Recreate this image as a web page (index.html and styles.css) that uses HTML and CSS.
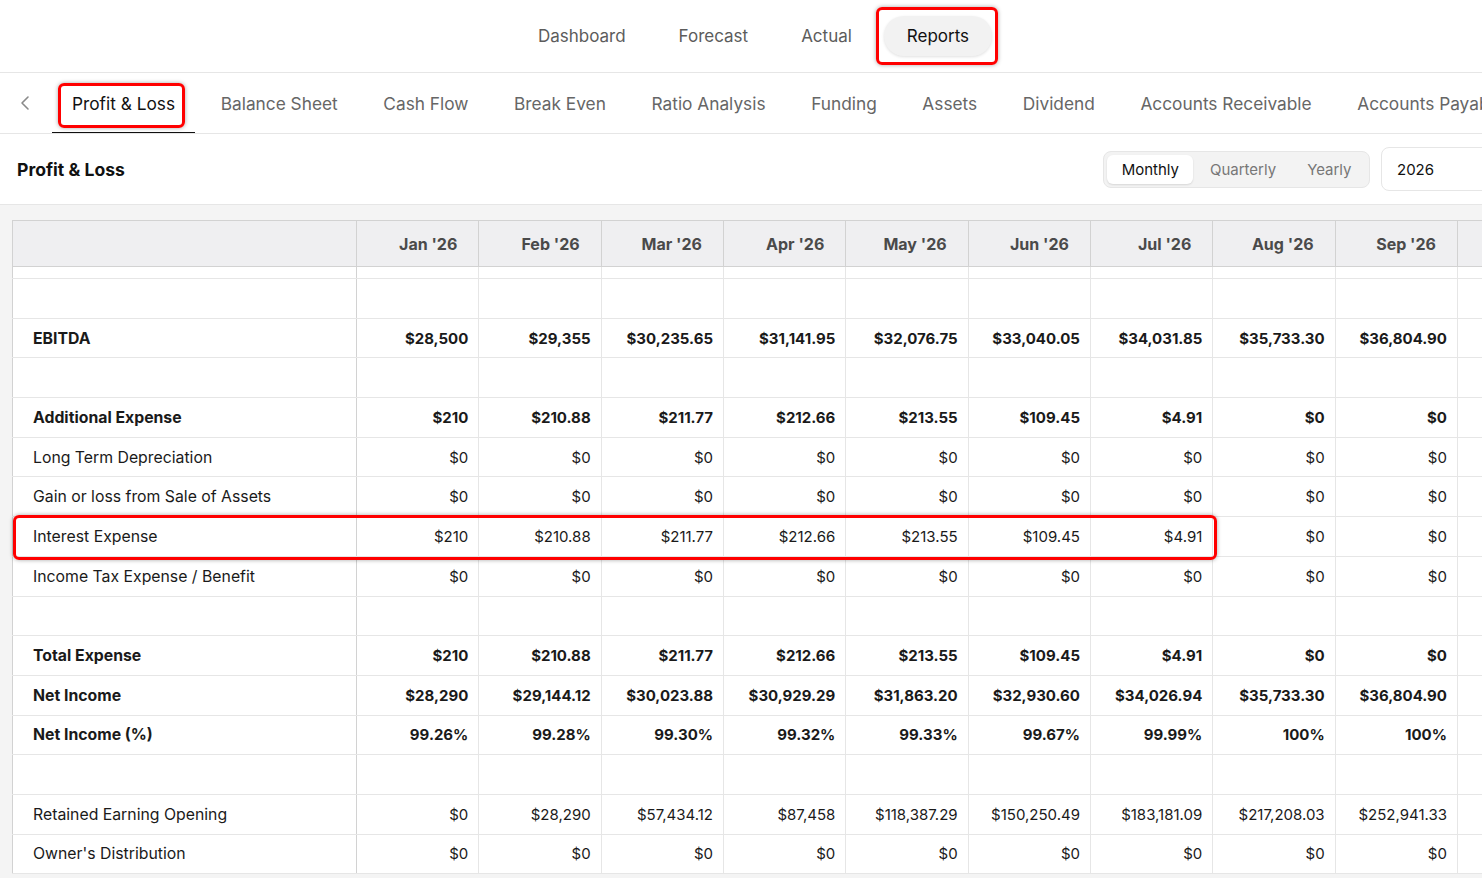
FILE: index.html
```html
<!DOCTYPE html>
<html lang="en">
<head>
    <meta charset="UTF-8">
    <meta name="viewport" content="width=device-width, initial-scale=1.0">
    <title>Reports - Profit &amp; Loss</title>
    <link rel="stylesheet" href="styles.css">
</head>
<body>
<div class="page">
    <!-- Main nav -->
    <nav class="top-nav">
        <a href="#">Dashboard</a>
        <a href="#">Forecast</a>
        <a href="#">Actual</a>
        <a href="#" class="active">Reports<span class="mark mark-nav"></span></a>
    </nav>

    <!-- Report tabs -->
    <div class="tabs">
        <div class="back">
            <svg width="12" height="16" viewBox="0 0 12 16"><path d="M9 2 L3 8 L9 14" fill="none" stroke="#8a8a8a" stroke-width="1.6" stroke-linecap="round" stroke-linejoin="round"/></svg>
        </div>
        <div class="tab active">Profit &amp; Loss<span class="mark mark-tab"></span></div>
        <div class="tab">Balance Sheet</div>
        <div class="tab">Cash Flow</div>
        <div class="tab">Break Even</div>
        <div class="tab">Ratio Analysis</div>
        <div class="tab">Funding</div>
        <div class="tab">Assets</div>
        <div class="tab">Dividend</div>
        <div class="tab">Accounts Receivable</div>
        <div class="tab">Accounts Payable</div>
    </div>

    <!-- Report header -->
    <div class="report-head">
        <h2>Profit &amp; Loss</h2>
        <div class="controls">
            <div class="segmented">
                <button class="on">Monthly</button>
                <button>Quarterly</button>
                <button>Yearly</button>
            </div>
            <div class="year">2026</div>
        </div>
    </div>

    <!-- Table -->
    <div class="table-wrap">
        <table class="report">
            <colgroup>
                <col class="c-label">
                <col span="12" class="c-month">
            </colgroup>
            <thead>
                <tr>
                    <th></th>
                    <th>Jan '26</th><th>Feb '26</th><th>Mar '26</th><th>Apr '26</th><th>May '26</th><th>Jun '26</th>
                    <th>Jul '26</th><th>Aug '26</th><th>Sep '26</th><th>Oct '26</th><th>Nov '26</th><th>Dec '26</th>
                </tr>
            </thead>
            <tbody>
                <tr class="thin"><td></td><td></td><td></td><td></td><td></td><td></td><td></td><td></td><td></td><td></td><td></td><td></td><td></td></tr>
                <tr class="blank"><td></td><td></td><td></td><td></td><td></td><td></td><td></td><td></td><td></td><td></td><td></td><td></td><td></td></tr>
                <tr class="bold">
                    <td>EBITDA</td>
                    <td>$28,500</td><td>$29,355</td><td>$30,235.65</td><td>$31,141.95</td><td>$32,076.75</td><td>$33,040.05</td>
                    <td>$34,031.85</td><td>$35,733.30</td><td>$36,804.90</td><td>$37,908</td><td>$39,045</td><td>$40,217</td>
                </tr>
                <tr class="blank"><td></td><td></td><td></td><td></td><td></td><td></td><td></td><td></td><td></td><td></td><td></td><td></td><td></td></tr>
                <tr class="bold">
                    <td>Additional Expense</td>
                    <td>$210</td><td>$210.88</td><td>$211.77</td><td>$212.66</td><td>$213.55</td><td>$109.45</td>
                    <td>$4.91</td><td>$0</td><td>$0</td><td>$0</td><td>$0</td><td>$0</td>
                </tr>
                <tr>
                    <td>Long Term Depreciation</td>
                    <td>$0</td><td>$0</td><td>$0</td><td>$0</td><td>$0</td><td>$0</td>
                    <td>$0</td><td>$0</td><td>$0</td><td>$0</td><td>$0</td><td>$0</td>
                </tr>
                <tr>
                    <td>Gain or loss from Sale of Assets</td>
                    <td>$0</td><td>$0</td><td>$0</td><td>$0</td><td>$0</td><td>$0</td>
                    <td>$0</td><td>$0</td><td>$0</td><td>$0</td><td>$0</td><td>$0</td>
                </tr>
                <tr>
                    <td class="has-mark">Interest Expense<span class="mark mark-row"></span></td>
                    <td>$210</td><td>$210.88</td><td>$211.77</td><td>$212.66</td><td>$213.55</td><td>$109.45</td>
                    <td>$4.91</td><td>$0</td><td>$0</td><td>$0</td><td>$0</td><td>$0</td>
                </tr>
                <tr>
                    <td>Income Tax Expense / Benefit</td>
                    <td>$0</td><td>$0</td><td>$0</td><td>$0</td><td>$0</td><td>$0</td>
                    <td>$0</td><td>$0</td><td>$0</td><td>$0</td><td>$0</td><td>$0</td>
                </tr>
                <tr class="blank"><td></td><td></td><td></td><td></td><td></td><td></td><td></td><td></td><td></td><td></td><td></td><td></td><td></td></tr>
                <tr class="bold">
                    <td>Total Expense</td>
                    <td>$210</td><td>$210.88</td><td>$211.77</td><td>$212.66</td><td>$213.55</td><td>$109.45</td>
                    <td>$4.91</td><td>$0</td><td>$0</td><td>$0</td><td>$0</td><td>$0</td>
                </tr>
                <tr class="bold">
                    <td>Net Income</td>
                    <td>$28,290</td><td>$29,144.12</td><td>$30,023.88</td><td>$30,929.29</td><td>$31,863.20</td><td>$32,930.60</td>
                    <td>$34,026.94</td><td>$35,733.30</td><td>$36,804.90</td><td>$37,908</td><td>$39,045</td><td>$40,217</td>
                </tr>
                <tr class="bold">
                    <td>Net Income (%)</td>
                    <td>99.26%</td><td>99.28%</td><td>99.30%</td><td>99.32%</td><td>99.33%</td><td>99.67%</td>
                    <td>99.99%</td><td>100%</td><td>100%</td><td>100%</td><td>100%</td><td>100%</td>
                </tr>
                <tr class="blank"><td></td><td></td><td></td><td></td><td></td><td></td><td></td><td></td><td></td><td></td><td></td><td></td><td></td></tr>
                <tr>
                    <td>Retained Earning Opening</td>
                    <td>$0</td><td>$28,290</td><td>$57,434.12</td><td>$87,458</td><td>$118,387.29</td><td>$150,250.49</td>
                    <td>$183,181.09</td><td>$217,208.03</td><td>$252,941.33</td><td>$289,746</td><td>$327,654</td><td>$366,700</td>
                </tr>
                <tr>
                    <td>Owner's Distribution</td>
                    <td>$0</td><td>$0</td><td>$0</td><td>$0</td><td>$0</td><td>$0</td>
                    <td>$0</td><td>$0</td><td>$0</td><td>$0</td><td>$0</td><td>$0</td>
                </tr>
            </tbody>
        </table>
    </div>
</div>
</body>
</html>
```

FILE: styles.css
```css
body {
    margin: 0;
    font-family: Inter, "Noto Sans", sans-serif;
    color: #1a1a1a;
    background: #f4f4f4;
    overflow: hidden;
}
.page {
    width: 1507px;
}

/* red review marks */
.mark {
    position: absolute;
    border: 3px solid #f00;
    border-radius: 6px;
    box-shadow: 0 0 4px rgba(0, 0, 0, 0.35);
    pointer-events: none;
    z-index: 5;
}

/* top nav */
.top-nav {
    height: 72px;
    background: #fff;
    border-bottom: 1px solid #e6e6e6;
    display: flex;
    justify-content: center;
    align-items: center;
    gap: 7px;
}
.top-nav a {
    position: relative;
    padding: 10px 23px;
    font-size: 17px;
    color: #5c5c5c;
    text-decoration: none;
    border-radius: 20px;
}
.top-nav a.active {
    margin-left: 2px;
    background: #f2f2f2;
    color: #111;
    box-shadow: 0 1px 3px rgba(0, 0, 0, 0.12);
}
.mark-nav {
    inset: -9px -6px -9px -8px;
}

/* report tabs */
.tabs {
    height: 60px;
    background: #fff;
    border-bottom: 1px solid #e6e6e6;
    display: flex;
    overflow: hidden;
}
.back {
    width: 52px;
    flex-shrink: 0;
    display: flex;
    align-items: center;
    padding-left: 19px;
    box-sizing: border-box;
}
.tab {
    position: relative;
    flex-shrink: 0;
    display: flex;
    align-items: center;
    padding: 0 20px;
    margin-right: 5.6px;
    font-size: 17.3px;
    color: #666;
    white-space: nowrap;
}
.tab.active {
    color: #111;
}
.tab.active::after {
    content: "";
    position: absolute;
    left: 0;
    right: 0;
    bottom: -1px;
    height: 2px;
    background: #111;
}
.mark-tab {
    inset: 10px 10px 5px 6px;
}

/* report header */
.report-head {
    height: 70px;
    background: #fff;
    border-bottom: 1px solid #e6e6e6;
    display: flex;
    align-items: center;
    justify-content: space-between;
    padding: 0 16px 0 17px;
}
.report-head h2 {
    margin: 0;
    font-size: 17.6px;
    font-weight: 700;
    color: #111;
}
.controls {
    display: flex;
    align-items: center;
    gap: 11px;
}
.segmented {
    display: flex;
    gap: 2px;
    padding: 3px;
    background: #f3f3f3;
    border: 1px solid #e6e6e6;
    border-radius: 8px;
}
.segmented button {
    height: 29px;
    padding: 0 14.5px;
    border: none;
    border-radius: 6px;
    background: transparent;
    font-family: inherit;
    font-size: 15px;
    color: #777;
}
.segmented button.on {
    background: #fff;
    color: #111;
    box-shadow: 0 1px 2px rgba(0, 0, 0, 0.12);
}
.year {
    width: 110px;
    height: 44px;
    box-sizing: border-box;
    padding-left: 15px;
    display: flex;
    align-items: center;
    font-size: 15px;
    color: #111;
    background: #fff;
    border: 1px solid #e6e6e6;
    border-radius: 8px;
}

/* table */
.table-wrap {
    padding: 15px 0 0 12px;
    overflow: hidden;
}
.report {
    border-collapse: collapse;
    table-layout: fixed;
    width: 1812px;
    background: #fff;
}
.c-label {
    width: 344px;
}
.c-month {
    width: 122.33px;
}
.report th {
    height: 45px;
    padding: 0 21px 0 0;
    background: #efeff1;
    border: 1px solid #d2d2d2;
    text-align: right;
    font-size: 16px;
    font-weight: 700;
    color: #4a4a4a;
}
.report td {
    height: 39.7px;
    padding: 0 10px 0 0;
    border: 1px solid #e6e6e6;
    text-align: right;
    font-size: 15px;
    white-space: nowrap;
    box-sizing: border-box;
}
.report td:first-child {
    padding-left: 20px;
    text-align: left;
    font-size: 15.8px;
    border-left-color: #d2d2d2;
    border-right-color: #d2d2d2;
}
.report tr.thin td {
    height: 12px;
}
.report tr.bold td {
    font-weight: 700;
}
.has-mark {
    position: relative;
}
.mark-row {
    left: 0;
    top: -2px;
    width: 1204px;
    height: 45px;
    box-sizing: border-box;
}
```
